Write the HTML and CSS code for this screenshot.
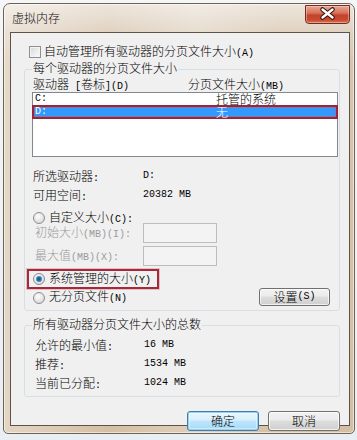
FILE: index.html
```html
<!DOCTYPE html>
<html lang="zh-CN">
<head>
<meta charset="utf-8">
<title>虚拟内存</title>
<link rel="stylesheet" href="styles.css">
</head>
<body>
<div class="win">
  <div class="titlebar">
    <span class="title">虚拟内存</span>
    <div class="close">
      <svg width="45" height="19" viewBox="0 0 45 19">
        <path d="M17.5 4.5 L27.5 12.5 M27.5 4.5 L17.5 12.5" stroke="#3a1610" stroke-width="4.6" stroke-linecap="round" fill="none"/>
        <path d="M17.5 4.5 L27.5 12.5 M27.5 4.5 L17.5 12.5" stroke="#ffffff" stroke-width="2.4" stroke-linecap="round" fill="none"/>
      </svg>
    </div>
  </div>
  <div class="client">
    <div class="chk-row"><span class="chk"></span><span>自动管理所有驱动器的分页文件大小<span class="a">(A)</span></span></div>

    <div class="group g1">
      <div class="glabel">每个驱动器的分页文件大小</div>
      <div class="cols"><span class="c1">驱动器<span class="a"> [</span>卷标<span class="a">](D)</span></span><span>分页文件大小<span class="a">(MB)</span></span></div>
      <div class="list">
        <div class="row"><span class="rc1 a">C:</span><span class="rt">托管的系统</span></div>
        <div class="row sel"><span class="rc1 a">D:</span><span class="rt">无</span></div>
      </div>
      <div class="info">
        <span>所选驱动器<span class="a">:</span></span><span class="a">D:</span>
        <span>可用空间<span class="a">:</span></span><span class="a">20382 MB</span>
      </div>
      <div class="radio-row r-custom"><span class="radio"></span><span>自定义大小<span class="a">(C):</span></span></div>
      <div class="field f1"><span class="dis">初始大小<span class="a">(MB)(I):</span></span><span class="input"></span></div>
      <div class="field f2"><span class="dis">最大值<span class="a">(MB)(X):</span></span><span class="input"></span></div>
      <div class="radio-row r-sys"><span class="radio on"></span><span>系统管理的大小<span class="a">(Y)</span></span></div>
      <div class="last-row">
        <div class="radio-row r-none"><span class="radio"></span><span>无分页文件<span class="a">(N)</span></span></div>
        <div class="btn b-set">设置<span class="a">(S)</span></div>
      </div>
    </div>

    <div class="group g2">
      <div class="glabel">所有驱动器分页文件大小的总数</div>
      <div class="totals">
        <span>允许的最小值<span class="a">:</span></span><span class="a">16 MB</span>
        <span>推荐<span class="a">:</span></span><span class="a">1534 MB</span>
        <span>当前已分配<span class="a">:</span></span><span class="a">1024 MB</span>
      </div>
    </div>

    <div class="actions">
      <div class="btn ok">确定</div>
      <div class="btn">取消</div>
    </div>
  </div>
</div>
</body>
</html>
```

FILE: styles.css
```css
* { box-sizing: border-box; }

html, body {
  margin: 0;
  padding: 0;
}

body {
  width: 357px;
  height: 440px;
  overflow: hidden;
  background: linear-gradient(180deg, #f4f6f8 0%, #e9eef3 100%);
  font-family: "Noto Sans CJK SC", "Noto Sans", sans-serif;
  font-weight: 300;
  font-size: 12px;
  line-height: 16px;
  color: #000;
}

.a {
  font-family: "Liberation Mono", "DejaVu Sans Mono", monospace;
  font-weight: 400;
  font-size: 10px;
}

.win {
  margin: 3px 0 0 3px;
  width: 352px;
  height: 431px;
  border: 1px solid #6d6255;
  border-radius: 7px 7px 5px 5px;
  background:
    linear-gradient(90deg, rgba(255,255,255,0.35) 0%, rgba(255,255,255,0) 30%, rgba(255,255,255,0.25) 55%, rgba(255,255,255,0) 80%),
    linear-gradient(180deg, #eee6dc 0px, #e0d2c1 28px, #d8c4ab 60px, #d5bfa4 100%);
  box-shadow: inset 0 0 0 1px rgba(255,255,255,0.55);
  display: flex;
  flex-direction: column;
  padding: 0 0 7px 0;
}

.titlebar {
  height: 28px;
  display: flex;
  justify-content: space-between;
  align-items: flex-start;
  padding-left: 8px;
  padding-right: 4px;
}

.title {
  margin-top: 6px;
  font-size: 12px;
  line-height: 16px;
  color: #111;
}

.close {
  margin-top: 1px;
  width: 45px;
  height: 19px;
  border: 1px solid #6e2c22;
  border-radius: 0 0 4px 4px;
  background: linear-gradient(180deg, #e9a796 0%, #d8735c 40%, #c4432b 55%, #c9492f 80%, #d9704f 100%);
  box-shadow: inset 0 0 0 1px rgba(255,220,210,0.45);
  overflow: hidden;
}

.close svg {
  display: block;
  margin: -1px 0 0 -1px;
}

.client {
  margin: 0 4px 0 6px;
  height: 394px;
  border: 1px solid #5d5348;
  background: #f0f0f0;
}

.chk-row {
  margin-top: 11px;
  padding-left: 18px;
  height: 16px;
  display: flex;
  align-items: center;
}

.chk {
  width: 12px;
  height: 12px;
  margin-right: 3px;
  border: 1px solid #8f8f8f;
  background: linear-gradient(135deg, #d6d6d6 0%, #eeeeee 60%, #fafafa 100%);
  box-shadow: inset 0 0 0 1px #f4f4f4;
}

.group {
  margin-left: 13px;
  width: 316px;
  border: 1px solid #d5dfe5;
  border-radius: 3px;
}

.g1 {
  margin-top: 9px;
  padding-bottom: 4px;
}

.g2 {
  margin-top: 14px;
  padding-bottom: 2px;
}

.glabel {
  margin-top: -10px;
  margin-left: 7px;
  padding: 0 1px;
  width: fit-content;
  background: #f0f0f0;
  line-height: 16px;
}

.cols {
  display: flex;
  padding-left: 8px;
  height: 16px;
}

.cols .c1 {
  width: 155px;
}

.list {
  margin-left: 7px;
  width: 306px;
  height: 65px;
  border: 1px solid #828790;
  background: #fff;
}

.row {
  display: flex;
  height: 12px;
  line-height: 12px;
  padding-left: 2px;
}

.rc1 {
  width: 181px;
}

.row.sel {
  margin: 0 -1px;
  height: 14px;
  line-height: 10px;
  padding-left: 1px;
  border: 2px solid #9b2436;
  background: #3399ff;
  color: #fff;
  box-shadow: inset 0 0 0 0.5px #c06070;
}

.info {
  margin-top: 11px;
  padding-left: 8px;
  display: grid;
  grid-template-columns: 110px auto;
  line-height: 16px;
}

.radio-row {
  display: flex;
  align-items: center;
  height: 12px;
  line-height: 12px;
}

.radio {
  width: 12px;
  height: 12px;
  margin-right: 4px;
  border-radius: 50%;
  border: 1px solid #8c8c8c;
  background: radial-gradient(circle at 40% 35%, #fdfdfd 0%, #e9e9e9 45%, #cfcfcf 100%);
}

.radio.on {
  background:
    radial-gradient(circle at 50% 50%, #16507e 0%, #2c76ad 28%, #7bb4de 45%, rgba(255,255,255,0) 50%),
    radial-gradient(circle at 40% 35%, #fdfdfd 0%, #e9e9e9 45%, #cfcfcf 100%);
}

.r-custom {
  margin-top: 6px;
  padding-left: 8px;
}

.field {
  display: flex;
  align-items: center;
  padding-left: 10px;
  height: 20px;
}

.f1 { margin-top: -1px; }
.f2 { margin-top: 3px; }

.dis {
  width: 108px;
  color: #9a9a9a;
}

.input {
  width: 74px;
  height: 20px;
  border: 1px solid #bdbdbd;
  background: #f3f3f3;
}

.r-sys {
  margin-top: 3px;
  margin-left: 2px;
  width: fit-content;
  height: 20px;
  padding: 0 6px 0 4px;
  border: 2px solid #a5283b;
  box-shadow: 0 0 0 1px rgba(200,100,110,0.35);
}

.last-row {
  margin-top: -1px;
  height: 18px;
  display: flex;
  justify-content: space-between;
  align-items: center;
  padding-left: 8px;
  padding-right: 9px;
}

.r-none {
  margin-top: 1px;
}

.btn {
  width: 72px;
  height: 20px;
  border: 1px solid #707070;
  border-radius: 3px;
  background: linear-gradient(180deg, #f2f2f2 0%, #ebebeb 45%, #dddddd 50%, #cfcfcf 100%);
  box-shadow: inset 0 0 0 1px rgba(255,255,255,0.7);
  display: flex;
  align-items: center;
  justify-content: center;
  line-height: 16px;
}

.b-set {
  width: 71px;
  height: 18px;
}

.btn.ok {
  border-color: #3c7fb1;
  background: linear-gradient(180deg, #eaf6fd 0%, #d9f0fc 45%, #bee6fd 50%, #a7d9f5 100%);
  box-shadow: inset 0 0 0 1px #98d1ef, inset 0 0 0 2px rgba(255,255,255,0.4);
}

.totals {
  margin-top: 5px;
  padding-left: 10px;
  display: grid;
  grid-template-columns: 109px auto;
  line-height: 16px;
}

.actions {
  margin-top: 14px;
  display: flex;
  justify-content: flex-end;
  gap: 9px;
  padding-right: 9px;
}
```
